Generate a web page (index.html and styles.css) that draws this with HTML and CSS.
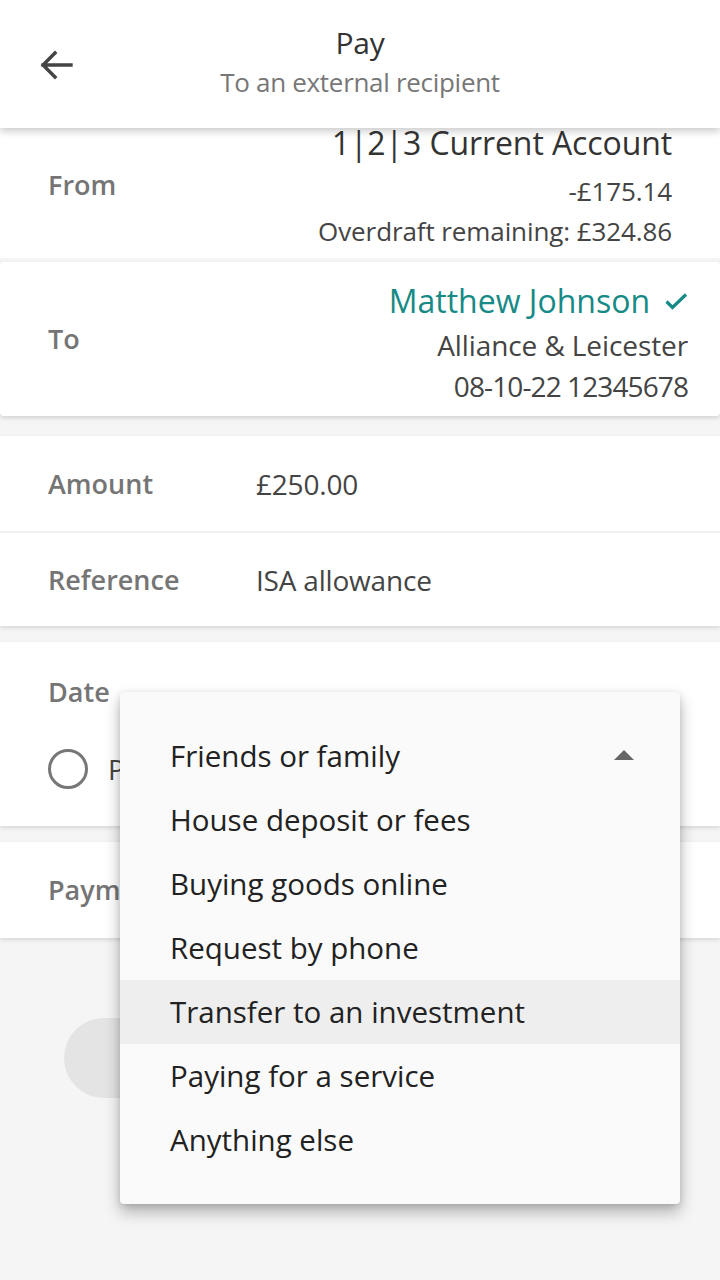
FILE: index.html
```html
<!DOCTYPE html>
<html>
<head>
<meta charset="utf-8">
<link rel="stylesheet" href="styles.css">
</head>
<body>
<div class="screen">
  <header class="appbar">
    <svg class="back" width="34" height="30" viewBox="0 0 34 30"><path d="M32 15H4M16 3L4 15l12 12" fill="none" stroke="#444" stroke-width="3.4" stroke-linecap="square"/></svg>
    <div class="titles">
      <div class="title">Pay</div>
      <div class="subtitle">To an external recipient</div>
    </div>
  </header>

  <section class="card from">
    <div class="label">From</div>
    <div class="right">
      <div class="acct">1|2|3 Current Account</div>
      <div class="line first">-£175.14</div>
      <div class="line">Overdraft remaining: £324.86</div>
    </div>
  </section>

  <section class="card to">
    <div class="label">To</div>
    <div class="right">
      <div class="payee">Matthew Johnson <svg class="tick" width="24" height="18" viewBox="0 0 24 18"><path d="M2.5 9.5l6 6L22 2.5" fill="none" stroke="#168a86" stroke-width="3.2"/></svg></div>
      <div class="line2 first">Alliance &amp; Leicester</div>
      <div class="line2 num">08-10-22 12345678</div>
    </div>
  </section>

  <section class="card group">
    <div class="row"><div class="label w">Amount</div><div class="val">£250.00</div></div>
    <div class="row"><div class="label w">Reference</div><div class="val">ISA allowance</div></div>
  </section>

  <section class="card date">
    <div class="label">Date</div>
    <div class="radio-row"><span class="radio"></span><span class="val">Pay now</span></div>
  </section>

  <section class="card pay">
    <div class="label">Payment reason</div>
  </section>

  <div class="btn-area"><div class="btn"></div></div>

  <div class="menu">
    <div class="item first">Friends or family <span class="caret"></span></div>
    <div class="item">House deposit or fees</div>
    <div class="item">Buying goods online</div>
    <div class="item">Request by phone</div>
    <div class="item hl">Transfer to an investment</div>
    <div class="item">Paying for a service</div>
    <div class="item">Anything else</div>
  </div>
</div>
</body>
</html>
```

FILE: styles.css
```css
* { box-sizing: border-box; }
html, body { margin: 0; padding: 0; }
body {
  background: #f5f5f5;
  font-family: "Open Sans", "Liberation Sans", sans-serif;
  width: 720px;
  height: 1280px;
  overflow: hidden;
}
.screen { position: relative; width: 720px; height: 1280px; }

.appbar {
  position: relative;
  z-index: 2;
  height: 128px;
  background: #fff;
  box-shadow: 0 3px 8px rgba(0,0,0,0.22);
  display: flex;
  align-items: center;
  justify-content: center;
}
.back { position: absolute; left: 39px; top: 50px; }
.titles { text-align: center; margin-top: -4px; }
.title { font-size: 30px; color: #333; line-height: 40px; letter-spacing: -0.3px; }
.subtitle { font-size: 26px; color: #777; line-height: 38px; letter-spacing: -0.3px; }

.card { background: #fff; }
.label { font-size: 27px; color: #757575; font-weight: 600; line-height: 38px; letter-spacing: 0; }

.from {
  height: 130px;
  display: flex;
  align-items: flex-start;
  justify-content: space-between;
  padding: 0 48px;
}
.from .label { margin-top: 38px; }
.from .right { text-align: right; margin-top: -3px; }
.acct { font-size: 32px; color: #333; line-height: 36px; letter-spacing: -0.1px; }
.line { font-size: 26px; color: #444; line-height: 40px; letter-spacing: -0.1px; }
.line.first { margin-top: 10px; }

.to {
  margin-top: 4px;
  height: 154px;
  display: flex;
  align-items: center;
  justify-content: space-between;
  padding: 0 32px 0 48px;
  border-radius: 4px;
  box-shadow: 0 2px 4px rgba(0,0,0,0.15);
}
.to .right { text-align: right; align-self: flex-start; padding-top: 17px; }
.payee { font-size: 32px; color: #168a86; line-height: 44px; display: flex; align-items: center; justify-content: flex-end; gap: 14px; letter-spacing: 0; }
.tick { margin-top: 0; }
.line2 { font-size: 28px; color: #444; line-height: 41px; letter-spacing: -0.1px; }
.line2.first { margin-top: 2px; }
.line2.num { letter-spacing: -0.9px; }

.group {
  margin-top: 20px;
  box-shadow: 0 2px 4px rgba(0,0,0,0.12);
}
.row {
  height: 95px;
  display: flex;
  align-items: center;
  padding: 0 48px;
}
.row + .row { border-top: 2px solid #f0f0f0; }
.w { width: 208px; }
.val { font-size: 28px; color: #444; letter-spacing: -0.2px; }

.date {
  margin-top: 16px;
  height: 184px;
  padding: 31px 48px 0;
  box-shadow: 0 2px 4px rgba(0,0,0,0.12);
}
.radio-row { display: flex; align-items: center; gap: 20px; margin-top: 38px; height: 40px; }
.radio { width: 40px; height: 40px; border: 3px solid #777; border-radius: 50%; flex: none; }

.pay {
  margin-top: 16px;
  height: 96px;
  display: flex;
  align-items: center;
  padding: 0 48px;
  box-shadow: 0 2px 4px rgba(0,0,0,0.12);
}

.btn-area { padding: 80px 64px 0; }
.btn { height: 80px; border-radius: 40px; background: #e4e4e4; }

.menu {
  position: absolute;
  left: 120px;
  top: 692px;
  width: 560px;
  height: 512px;
  padding: 32px 0;
  background: #fafafa;
  border-radius: 4px;
  box-shadow: 0 8px 16px rgba(0,0,0,0.28), 0 2px 6px rgba(0,0,0,0.12);
  z-index: 5;
}
.item {
  height: 64px;
  display: flex;
  align-items: center;
  padding-left: 50px;
  padding-bottom: 2px;
  font-size: 29.5px;
  color: #222;
  position: relative;
  letter-spacing: 0;
}
.item.hl { background: #eeeeee; }
.caret {
  position: absolute;
  right: 46px;
  top: 26px;
  width: 0; height: 0;
  border-left: 10px solid transparent;
  border-right: 10px solid transparent;
  border-bottom: 10px solid #666;
}
```
